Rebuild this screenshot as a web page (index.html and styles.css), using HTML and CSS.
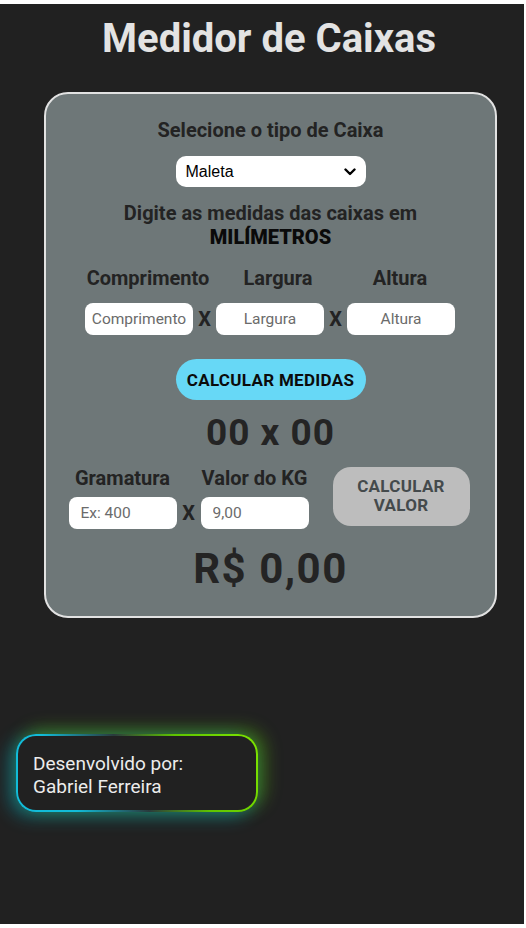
FILE: index.html
```html
<!DOCTYPE html>
<html lang="pt-BR">
<head>
<meta charset="utf-8">
<title>Medidor de Caixas</title>
<link rel="stylesheet" href="styles.css">
</head>
<body>
<div class="page">
  <h1 class="title">Medidor de Caixas</h1>
  <main class="card">
    <h2 class="heading">Selecione o tipo de Caixa</h2>
    <div class="select-wrap">
      <div class="select-box">
        <select class="select">
          <option>Maleta</option>
        </select>
        <svg class="chev" width="12" height="8" viewBox="0 0 12 8" aria-hidden="true"><path d="M1.5 1.5 L6 6 L10.5 1.5" fill="none" stroke="#000" stroke-width="2.4" stroke-linecap="round" stroke-linejoin="round"/></svg>
      </div>
    </div>
    <p class="heading heading-two">Digite as medidas das caixas em<br><strong class="mm">MILÍMETROS</strong></p>
    <div class="labels">
      <span class="lbl lbl-1">Comprimento</span>
      <span class="lbl lbl-2">Largura</span>
      <span class="lbl lbl-3">Altura</span>
    </div>
    <div class="inputs">
      <input class="field" type="text" placeholder="Comprimento">
      <span class="times">X</span>
      <input class="field" type="text" placeholder="Largura">
      <span class="times">X</span>
      <input class="field" type="text" placeholder="Altura">
    </div>
    <div class="btn-row">
      <button class="btn-calc">CALCULAR MEDIDAS</button>
    </div>
    <div class="result">00 x 00</div>
    <div class="value-row">
      <div class="value-group">
        <div class="value-labels">
          <span class="vlbl vlbl-1">Gramatura</span>
          <span class="vlbl vlbl-2">Valor do KG</span>
        </div>
        <div class="value-inputs">
          <input class="field field-left" type="text" placeholder="Ex: 400">
          <span class="times times-v">X</span>
          <input class="field field-left" type="text" placeholder="9,00">
        </div>
      </div>
      <button class="btn-valor">CALCULAR<br>VALOR</button>
    </div>
    <div class="price">R$ 0,00</div>
  </main>
  <footer class="credit">
    <p>Desenvolvido por:<br>Gabriel Ferreira</p>
  </footer>
</div>
</body>
</html>
```
FILE: styles.css
```css
html, body {
  margin: 0;
  padding: 0;
  background: #ffffff;
}
body {
  font-family: Roboto, "Liberation Sans", Arial, sans-serif;
}
.page {
  margin: 4px 2px 0 0;
  height: 920px;
  background: #212121;
  overflow: hidden;
  display: flow-root;
}
.title {
  margin: 14px 0 0 0;
  padding-left: 14px;
  text-align: center;
  font-size: 40px;
  line-height: 42px;
  font-weight: 700;
  color: #e3e3e3;
}
.card {
  box-sizing: border-box;
  margin: 32px 0 0 44px;
  width: 453px;
  height: 526px;
  border: 2px solid #e2e2e2;
  border-radius: 24px;
  background: #6e7778;
  padding-top: 25px;
  color: #232323;
}
.heading {
  margin: 0;
  text-align: center;
  font-size: 20px;
  line-height: 22px;
  font-weight: 700;
  color: #232323;
}
.select-wrap {
  display: flex;
  justify-content: center;
  margin-top: 15px;
}
.select-box {
  position: relative;
  width: 190px;
  height: 31px;
}
.select {
  appearance: none;
  -webkit-appearance: none;
  width: 190px;
  height: 31px;
  border: none;
  border-radius: 10px;
  background: #ffffff;
  font-family: "Liberation Sans", Arial, sans-serif;
  font-size: 16px;
  color: #000;
  padding: 0 24px 0 10px;
}
.chev {
  position: absolute;
  right: 10px;
  top: 12px;
  pointer-events: none;
}
.heading-two {
  margin-top: 14px;
  line-height: 24px;
}
.mm {
  color: #0a0a0a;
}
.labels {
  display: flex;
  margin: 18px 0 0 39px;
  font-size: 20px;
  font-weight: 700;
  line-height: 22px;
  color: #232323;
}
.lbl { text-align: center; }
.lbl-1 { width: 126px; }
.lbl-2 { width: 134px; }
.lbl-3 { width: 110px; }
.inputs {
  display: flex;
  align-items: center;
  margin: 14px 0 0 39px;
}
.field {
  box-sizing: border-box;
  width: 108px;
  height: 32px;
  border: none;
  border-radius: 8px;
  background: #fff;
  font-family: Roboto, "Liberation Sans", Arial, sans-serif;
  font-size: 15.5px;
  text-align: center;
  padding: 0 2px;
  color: #333;
}
.field::placeholder {
  color: #6b6b6b;
}
.field-left {
  text-align: left;
  padding-left: 12px;
}
.times {
  width: 23px;
  text-align: center;
  font-size: 20px;
  font-weight: 700;
  color: #232323;
}
.btn-row {
  display: flex;
  justify-content: center;
  margin-top: 24px;
}
.btn-calc {
  width: 190px;
  height: 41px;
  border: none;
  border-radius: 21px;
  background: #67d8f6;
  font-family: Roboto, "Liberation Sans", Arial, sans-serif;
  font-size: 17px;
  font-weight: 700;
  letter-spacing: 0.3px;
  color: #0b0b0b;
}
.result {
  margin-top: 13px;
  text-align: center;
  font-size: 37px;
  line-height: 40px;
  font-weight: 700;
  letter-spacing: 1px;
  color: #242424;
}
.value-row {
  display: flex;
  align-items: center;
  justify-content: center;
  gap: 24px;
  margin-top: 14px;
  padding-right: 3px;
}
.value-group {
  display: flex;
  flex-direction: column;
}
.value-labels {
  display: flex;
  font-size: 20px;
  font-weight: 700;
  line-height: 22px;
  color: #232323;
}
.vlbl { text-align: center; white-space: nowrap; }
.vlbl-1 { width: 108px; }
.vlbl-2 { width: 108px; margin-left: 24px; }
.value-inputs {
  display: flex;
  align-items: center;
  margin-top: 8px;
}
.times-v { width: 24px; }
.btn-valor {
  width: 137px;
  height: 59px;
  border: none;
  border-radius: 18px;
  background: #bdbdbd;
  font-family: Roboto, "Liberation Sans", Arial, sans-serif;
  font-size: 17px;
  line-height: 19px;
  font-weight: 700;
  letter-spacing: 0.3px;
  color: #444a4c;
  margin-top: -4px;
  padding: 0;
}
.price {
  margin-top: 18px;
  text-align: center;
  font-size: 42px;
  line-height: 44px;
  font-weight: 700;
  letter-spacing: 1.5px;
  color: #242424;
}
.credit {
  box-sizing: border-box;
  margin: 116px 0 0 16px;
  width: 242px;
  height: 78px;
  border: 2px solid transparent;
  border-radius: 20px;
  background:
    linear-gradient(#212121, #212121) padding-box,
    linear-gradient(65deg, #12bcd8 0%, #12bcd8 22%, #2a3a3c 48%, #5fc400 70%, #7ee600 100%) border-box;
  box-shadow:
    -6px 4px 18px rgba(0, 190, 220, 0.45),
    6px -4px 18px rgba(110, 230, 0, 0.4);
  padding: 16px 15px;
}
.credit p {
  margin: 0;
  font-size: 19px;
  line-height: 23px;
  color: #ececec;
}
```
